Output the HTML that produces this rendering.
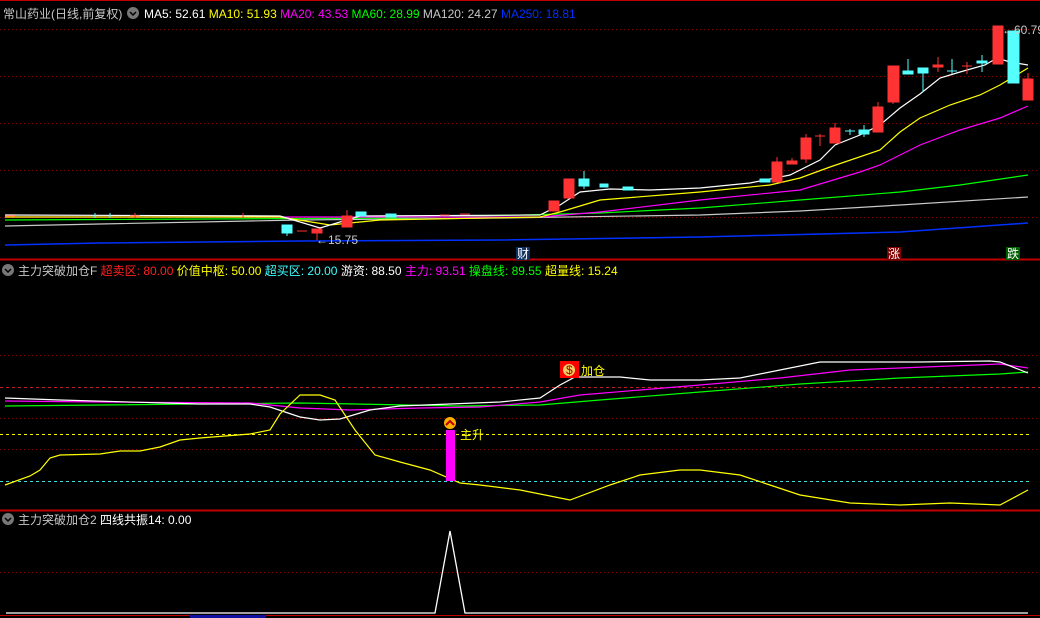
<!DOCTYPE html>
<html><head><meta charset="utf-8"><style>
html,body{margin:0;padding:0;background:#000;width:1040px;height:618px;overflow:hidden}
svg{display:block}
text{font-family:"Liberation Sans","Noto Sans CJK SC",sans-serif;font-size:12px}
</style></head><body>
<svg width="1040" height="618" viewBox="0 0 1040 618" xmlns="http://www.w3.org/2000/svg">
<rect width="1040" height="618" fill="#000"/>
<line x1="0" y1="0.5" x2="1040" y2="0.5" stroke="#c00000"/>
<g stroke="#8b0000" stroke-dasharray="1,3">
<line x1="0" y1="29.5" x2="1040" y2="29.5"/><line x1="0" y1="76.5" x2="1040" y2="76.5"/>
<line x1="0" y1="123.5" x2="1040" y2="123.5"/><line x1="0" y1="170.5" x2="1040" y2="170.5"/>
<line x1="0" y1="217.5" x2="1040" y2="217.5"/>
<line x1="0" y1="355.5" x2="1040" y2="355.5"/><line x1="0" y1="418.5" x2="1040" y2="418.5"/>
<line x1="0" y1="449.5" x2="1040" y2="449.5"/><line x1="0" y1="572.5" x2="1040" y2="572.5"/>
</g>
<line x1="0" y1="387.5" x2="1040" y2="387.5" stroke="#c02020" stroke-dasharray="3,3"/>
<line x1="0" y1="434.5" x2="1030" y2="434.5" stroke="#ffff00" stroke-dasharray="3,3"/>
<line x1="0" y1="481.5" x2="1030" y2="481.5" stroke="#40e0e0" stroke-dasharray="3,3"/>
<line x1="0" y1="259.5" x2="1040" y2="259.5" stroke="#c00000" stroke-width="2"/>
<line x1="0" y1="510.5" x2="1040" y2="510.5" stroke="#c00000" stroke-width="2"/>
<line x1="0" y1="615.5" x2="1040" y2="615.5" stroke="#c00000"/>
<rect x="190" y="615" width="76" height="3" fill="#1010a0"/>

<g fill="none" stroke-width="1.2">
<polyline stroke="#0030ff" stroke-width="1.5" points="5,245 100,243 300,241 500,240 700,237 900,232 1028,223"/>
<polyline stroke="#c8c8c8" points="5,226 100,224 200,222 300,220 500,218 700,215 800,211 900,205 1028,197"/>
<polyline stroke="#00ff00" points="5,220 400,218 600,213 700,208 800,200 900,192 960,185 1028,175"/>
<polyline stroke="#ff00ff" points="5,217 540,217 600,212 700,200 800,190 860,172 880,165 920,145 960,130 1000,118 1028,106"/>
<polyline stroke="#ffff00" points="5,217 280,217 330,225 380,220 540,217 560,212 600,200 700,192 770,185 800,178 830,167 880,150 900,132 920,118 950,105 980,95 1000,85 1028,68"/>
<polyline stroke="#ffffff" points="5,215 280,216 320,228 360,216 540,215 560,205 580,192 610,189 650,190 700,188 750,183 790,175 820,160 835,145 860,135 880,125 900,108 920,94 940,78 960,72 985,65 997,58 1010,62 1028,65"/>
</g>
<g>
<g fill="#ff3333" stroke="#ff3333">
<rect x="312" y="229" width="10" height="4"/><line x1="317" y1="233" x2="317" y2="240"/>
<line x1="297" y1="231" x2="307" y2="231"/>
<rect x="342" y="216" width="10" height="11"/><line x1="347" y1="210" x2="347" y2="216"/>
<rect x="549" y="201" width="10" height="10"/>
<rect x="564" y="179" width="10" height="19"/>
<rect x="772" y="162" width="10" height="20"/><line x1="777" y1="157" x2="777" y2="162"/>
<rect x="787" y="161" width="10" height="3"/><line x1="792" y1="158" x2="792" y2="161"/>
<rect x="801" y="138" width="10" height="21"/><line x1="806" y1="134" x2="806" y2="163"/>
<line x1="815" y1="136" x2="825" y2="136"/><line x1="820" y1="134" x2="820" y2="146"/>
<rect x="830" y="128" width="10" height="15"/><line x1="835" y1="123" x2="835" y2="128"/>
<rect x="873" y="107" width="10" height="25"/><line x1="878" y1="102" x2="878" y2="107"/>
<rect x="888" y="66" width="11" height="36"/><line x1="893" y1="102" x2="893" y2="104"/>
<rect x="933" y="65" width="10" height="2"/><line x1="938" y1="57" x2="938" y2="72"/>
<line x1="962" y1="66" x2="972" y2="66"/><line x1="967" y1="62" x2="967" y2="74"/>
<rect x="993" y="26" width="10" height="38"/>
<rect x="1023" y="79" width="10" height="21"/><line x1="1028" y1="73" x2="1028" y2="79"/>
<line x1="5" y1="216" x2="15" y2="216"/><line x1="130" y1="216" x2="140" y2="216"/>
<line x1="135" y1="213" x2="135" y2="218"/><line x1="243" y1="213" x2="243" y2="218"/>
<line x1="440" y1="215" x2="450" y2="215"/><line x1="460" y1="214" x2="470" y2="214"/>
</g>
<g fill="#55ffff" stroke="#55ffff">
<rect x="282" y="225" width="10" height="8"/><line x1="287" y1="233" x2="287" y2="236"/>
<rect x="356" y="212" width="10" height="4"/>
<rect x="386" y="214" width="10" height="3"/>
<rect x="579" y="179" width="10" height="7"/><line x1="584" y1="171" x2="584" y2="189"/>
<rect x="600" y="184" width="8" height="3"/><rect x="623" y="187" width="10" height="3"/>
<rect x="760" y="179" width="10" height="3"/>
<line x1="845" y1="131" x2="855" y2="131"/><line x1="850" y1="129" x2="850" y2="135"/>
<rect x="859" y="130" width="10" height="4"/><line x1="864" y1="125" x2="864" y2="137"/>
<rect x="903" y="71" width="10" height="3"/><line x1="908" y1="59" x2="908" y2="74"/>
<rect x="918" y="68" width="10" height="5"/><line x1="923" y1="73" x2="923" y2="92"/>
<line x1="947" y1="71" x2="957" y2="71"/><line x1="952" y1="59" x2="952" y2="74"/>
<rect x="977" y="61" width="10" height="2"/><line x1="982" y1="55" x2="982" y2="72"/>
<rect x="1008" y="31" width="11" height="52"/>
<line x1="95" y1="213" x2="95" y2="218"/><line x1="110" y1="213" x2="110" y2="218"/>
</g>
</g>
<text x="316" y="244" fill="#c8c8c8">←15.75</text>
<text x="1002" y="34" fill="#c8c8c8">←60.79</text>
<rect x="516" y="247" width="14" height="13" fill="#103060"/><text x="517" y="258" fill="#fff" font-size="11">财</text>
<rect x="887" y="247" width="14" height="13" fill="#800000"/><text x="888" y="258" fill="#fff" font-size="11">涨</text>
<rect x="1006" y="247" width="14" height="13" fill="#006000"/><text x="1007" y="258" fill="#fff" font-size="11">跌</text>

<text x="3" y="18" fill="#c8c8c8" font-size="13">常山药业(日线,前复权)</text>
<circle cx="133" cy="13" r="6" fill="#777"/><path d="M130,12 l3,3 l3,-3" stroke="#000" fill="none" stroke-width="1.5"/>
<text x="144" y="18" font-size="12"><tspan fill="#fff">MA5: 52.61 </tspan><tspan fill="#ffff00">MA10: 51.93 </tspan><tspan fill="#ff00ff">MA20: 43.53 </tspan><tspan fill="#00ff00">MA60: 28.99 </tspan><tspan fill="#c8c8c8">MA120: 24.27 </tspan><tspan fill="#0030ff">MA250: 18.81</tspan></text>

<circle cx="8" cy="270" r="6" fill="#777"/><path d="M5,269 l3,3 l3,-3" stroke="#000" fill="none" stroke-width="1.5"/>
<text x="18" y="275" font-size="12.3"><tspan fill="#c8c8c8">主力突破加仓F </tspan><tspan fill="#ff2020">超卖区: 80.00 </tspan><tspan fill="#ffff00">价值中枢: 50.00 </tspan><tspan fill="#40ffff">超买区: 20.00 </tspan><tspan fill="#fff">游资: 88.50 </tspan><tspan fill="#ff00ff">主力: 93.51 </tspan><tspan fill="#00ff00">操盘线: 89.55 </tspan><tspan fill="#ffff00">超量线: 15.24</tspan></text>
<g fill="none" stroke-width="1.2">
<polyline stroke="#00ff00" points="5,406 100,405 300,403 460,406 540,405 600,400 700,392 800,384 900,378 1000,374 1028,372"/>
<polyline stroke="#ff00ff" points="5,401 100,402 250,403 300,408 350,410 420,408 480,407 540,402 580,395 640,390 700,385 780,378 850,370 900,368 1000,364 1028,368"/>
<polyline stroke="#ffffff" points="5,398 60,400 200,404 250,404 270,407 300,417 320,420 340,419 370,410 400,406 450,404 500,402 540,398 560,385 575,377 620,377 650,380 700,380 740,378 780,370 820,362 870,362 920,362 990,361 1000,362 1028,373"/>
<polyline stroke="#ffff00" points="5,485 30,476 40,470 50,458 60,455 100,454 120,451 140,451 160,447 180,440 200,438 250,434 270,430 280,414 300,395 320,395 335,400 355,430 375,455 400,462 430,470 460,483 480,485 520,490 570,500 610,485 640,475 680,470 700,470 740,475 770,485 800,495 850,503 900,505 950,503 1000,505 1028,490"/>
</g>
<rect x="446" y="430" width="9" height="51" fill="#ff00ff"/>
<circle cx="450" cy="423" r="6" fill="#ffb000"/><path d="M446,425 l4,-4 l4,4" stroke="#c00000" fill="none" stroke-width="2"/>
<text x="460" y="439" fill="#ffff00">主升</text>
<rect x="560" y="361" width="19" height="17" fill="#ff0000"/>
<circle cx="569" cy="370" r="6" fill="#f0d060"/><text x="566" y="374" fill="#a00000" font-size="8">$</text>
<text x="581" y="375" fill="#ffff00">加仓</text>

<circle cx="8" cy="519" r="6" fill="#777"/><path d="M5,518 l3,3 l3,-3" stroke="#000" fill="none" stroke-width="1.5"/>
<text x="18" y="524" font-size="12.3"><tspan fill="#c8c8c8">主力突破加仓2 </tspan><tspan fill="#fff">四线共振14: 0.00</tspan></text>
<polyline fill="none" stroke="#fff" stroke-width="1.3" points="6,613 435,613 450,531 465,613 1028,613"/>
</svg>
</body></html>
